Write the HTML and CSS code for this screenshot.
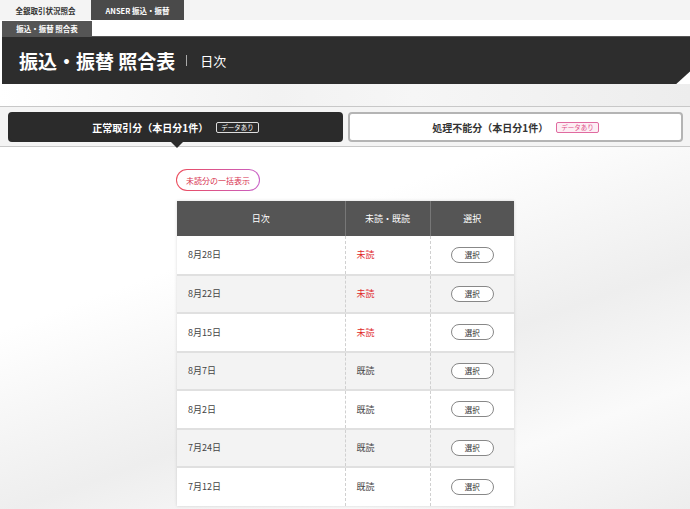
FILE: index.html
```html
<!DOCTYPE html>
<html lang="ja">
<head>
    <meta charset="utf-8">
    <title>振込・振替 照合表</title>
    <link rel="stylesheet" href="styles.css">
</head>
<body>
<div class="topnav">
    <a class="topnav-item">全銀取引状況照会</a>
    <a class="topnav-item active">ANSER 振込・振替</a>
</div>
<div class="crumbs">
    <span class="crumb">振込・振替 照合表</span>
</div>
<div class="page-head">
    <h1>振込・振替 照合表</h1>
    <span class="sep"></span>
    <span class="sub">日次</span>
</div>
<div class="band"></div>

<div class="tabs">
    <div class="tab current">
        <span>正常取引分（本日分1件）</span>
        <span class="badge">データあり</span>
    </div>
    <div class="tab">
        <span>処理不能分（本日分1件）</span>
        <span class="badge pink">データあり</span>
    </div>
</div>

<div class="content">
    <button class="bulk-btn"><span>未読分の一括表示</span></button>
    <table class="list">
        <thead>
            <tr>
                <th class="c-date">日次</th>
                <th class="c-state">未読・既読</th>
                <th class="c-sel">選択</th>
            </tr>
        </thead>
        <tbody>
            <tr><td>8月28日</td><td class="unread">未読</td><td class="sel"><button>選択</button></td></tr>
            <tr><td>8月22日</td><td class="unread">未読</td><td class="sel"><button>選択</button></td></tr>
            <tr><td>8月15日</td><td class="unread">未読</td><td class="sel"><button>選択</button></td></tr>
            <tr><td>8月7日</td><td>既読</td><td class="sel"><button>選択</button></td></tr>
            <tr><td>8月2日</td><td>既読</td><td class="sel"><button>選択</button></td></tr>
            <tr><td>7月24日</td><td>既読</td><td class="sel"><button>選択</button></td></tr>
            <tr><td>7月12日</td><td>既読</td><td class="sel"><button>選択</button></td></tr>
        </tbody>
    </table>
</div>
</body>
</html>
```

FILE: styles.css
```css
* {
    margin: 0;
    padding: 0;
    box-sizing: border-box;
}
body {
    font-family: "Noto Sans CJK JP", "Noto Sans", sans-serif;
    background: #fff;
    color: #333;
    width: 690px;
    overflow: hidden;
}
.topnav {
    display: flex;
    height: 20px;
    background: #f4f4f4;
}
.topnav-item {
    width: 91px;
    display: flex;
    align-items: center;
    justify-content: center;
    font-size: 7.5px;
    font-weight: bold;
    color: #333;
}
.topnav-item.active {
    width: 93px;
    background: #4a4a4a;
    color: #fff;
}
.crumbs {
    display: flex;
    padding: 1px 0 0 2px;
    height: 16px;
}
.crumb {
    display: flex;
    align-items: center;
    justify-content: center;
    width: 90px;
    height: 15px;
    background: #555;
    color: #fff;
    font-size: 7.5px;
    font-weight: bold;
}
.page-head {
    margin-left: 2px;
    height: 48px;
    background: #2d2d2d;
    border-top: 1px solid #555;
    display: flex;
    align-items: center;
    padding-left: 17px;
    clip-path: polygon(0 0, 100% 0, 100% 74%, 98% 100%, 0 100%);
}
.page-head h1 {
    font-size: 19px;
    font-weight: bold;
    color: #fff;
}
.sep {
    width: 1px;
    height: 11px;
    background: #aaa;
    margin: 0 13px 0 11px;
}
.sub {
    font-size: 13px;
    color: #fff;
}
.band {
    height: 23px;
    background: linear-gradient(90deg, #fff 0%, #f2f2f2 40%, #f6f6f6 60%, #ededed 100%);
    border-bottom: 1px solid #c8c8c8;
}
.tabs {
    display: flex;
    gap: 5px;
    padding: 5px 7px 4px 8px;
    background: #f4f4f4;
    border-bottom: 1px solid #c8c8c8;
}
.tab {
    position: relative;
    flex: 1;
    height: 30px;
    display: flex;
    align-items: center;
    justify-content: center;
    gap: 8px;
    font-size: 10px;
    font-weight: bold;
    color: #333;
    background: #fff;
    border: 2px solid #b4b4b4;
    border-radius: 4px;
}
.tab.current {
    background: #2b2b2b;
    border-color: #2b2b2b;
    color: #fff;
}
.tab.current::after {
    content: "";
    position: absolute;
    left: 161px;
    bottom: -8px;
    border-left: 6px solid transparent;
    border-right: 6px solid transparent;
    border-top: 6px solid #2b2b2b;
}
.badge {
    font-size: 6.5px;
    font-weight: normal;
    padding: 0 4px;
    height: 11px;
    line-height: 9px;
    border: 1px solid #ddd;
    border-radius: 2px;
    color: #fff;
}
.badge.pink {
    border-color: #e06aa0;
    color: #e0508a;
    background: #fdeef4;
}
.content {
    height: 362px;
    padding: 22px 0 0 176px;
    background: linear-gradient(160deg, #fff 30%, #eeeeee 60%, #fafafa 80%, #ededed 100%);
}
.bulk-btn {
    display: block;
    width: 84px;
    height: 22px;
    border: 1px solid transparent;
    border-radius: 11px;
    background: linear-gradient(#fff, #fff) padding-box, linear-gradient(90deg, #ec4b5a, #c860c8) border-box;
    font-family: inherit;
    font-size: 8px;
    color: #d83250;
    cursor: pointer;
}
.list {
    margin: 10px 0 0 1px;
    width: 337px;
    border-collapse: collapse;
    box-shadow: 0 0 3px rgba(0, 0, 0, 0.15);
    font-size: 9px;
}
.list th {
    height: 35px;
    background: #555;
    color: #fff;
    font-weight: normal;
    border-left: 1px solid #777;
}
.list th:first-child {
    border-left: 0;
}
.c-date { width: 168px; }
.c-state { width: 85px; }
.list td {
    height: 38.5px;
    padding-left: 11px;
    border-top: 2px solid #e0e0e0;
    border-left: 1px dashed #d0d0d0;
    color: #444;
}
.list td:first-child {
    border-left: 0;
}
.list tbody tr:first-child td {
    border-top: 0;
}
.list tbody tr:nth-child(odd) { background: #fff; }
.list tbody tr:nth-child(even) { background: #f3f3f3; }
.list td.unread {
    color: #e02828;
}
.list td.sel {
    padding-left: 0;
    text-align: center;
}
.sel button {
    width: 43px;
    height: 16px;
    border: 1px solid #888;
    border-radius: 8px;
    background: #fff;
    font-family: inherit;
    font-size: 7.5px;
    color: #333;
    cursor: pointer;
}
```
